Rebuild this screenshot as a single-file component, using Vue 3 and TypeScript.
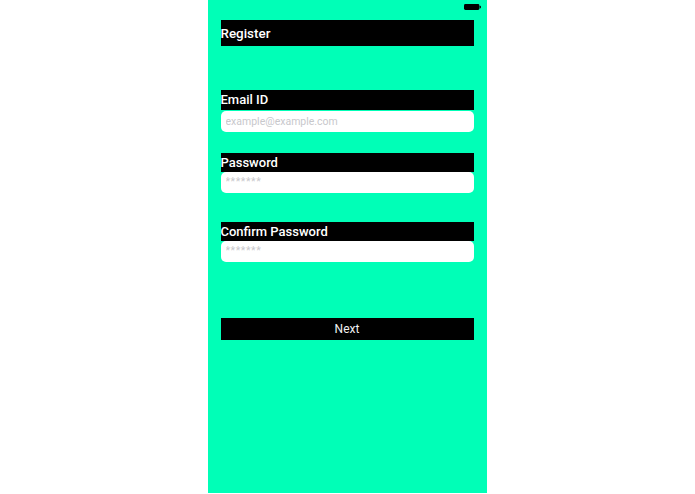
<script setup lang="ts">
interface Field { label: string; placeholder: string; cls: string }
const fields: Field[] = [
  { label: 'Email ID', placeholder: 'example@example.com', cls: 'email' },
  { label: 'Password', placeholder: '*******', cls: 'pw' },
  { label: 'Confirm Password', placeholder: '*******', cls: 'confirm' },
]
</script>

<template>
  <div class="page">
    <main class="phone">
      <div class="status">
        <svg class="battery" width="17" height="6" viewBox="0 0 17 6">
          <rect x="0" y="0" width="15.4" height="6" rx="1.4" fill="#000" />
          <rect x="15.7" y="1.8" width="1.2" height="2.4" rx="0.5" fill="#000" />
        </svg>
      </div>
      <h1 class="title">Register</h1>
      <div v-for="f in fields" :key="f.label" class="field" :class="f.cls">
        <label class="label">{{ f.label }}</label>
        <input class="input" :class="{ stars: f.placeholder.startsWith('*') }" :placeholder="f.placeholder" />
      </div>
      <button class="next">Next</button>
    </main>
  </div>
</template>

<style scoped>
.page {
  width: 695px;
  height: 494px;
  display: flex;
  justify-content: center;
  background: #fff;
  overflow: hidden;
}
.phone {
  width: 279px;
  height: 493px;
  box-sizing: border-box;
  padding: 0 13px;
  margin-right: 1px;
  background: #00ffb7;
  display: flex;
  flex-direction: column;
  font-family: Roboto, "Liberation Sans", sans-serif;
}
.status {
  height: 20px;
  display: flex;
  justify-content: flex-end;
  padding-top: 4px;
  box-sizing: border-box;
}
.battery {
  margin-right: -7px;
}
.title {
  margin: 0;
  height: 26px;
  line-height: 27px;
  background: #000;
  color: #fff;
  font-size: 13.4px;
  font-weight: 500;
}
.field {
  display: flex;
  flex-direction: column;
}
.email { margin-top: 44px; }
.pw { margin-top: 21px; }
.confirm { margin-top: 29px; }
.label {
  background: #000;
  color: #fff;
  font-size: 13px;
  font-weight: 500;
  height: 19px;
  line-height: 19px;
}
.email .label {
  height: 20px;
  line-height: 20px;
  margin-bottom: 1px;
}
.input {
  box-sizing: border-box;
  margin: 0;
  height: 21px;
  border: 0;
  outline: 0;
  border-radius: 5px;
  background: #fff;
  padding: 0 5px;
  font-family: inherit;
  font-size: 10.5px;
}
.input::placeholder {
  color: #c8c8cc;
  opacity: 1;
}
.input.stars {
  padding-bottom: 3px;
  letter-spacing: 0.6px;
}
.next {
  margin-top: 56px;
  height: 22px;
  border: 0;
  padding: 0;
  background: #000;
  color: #f0f0f0;
  font-family: inherit;
  font-size: 12px;
}
</style>
